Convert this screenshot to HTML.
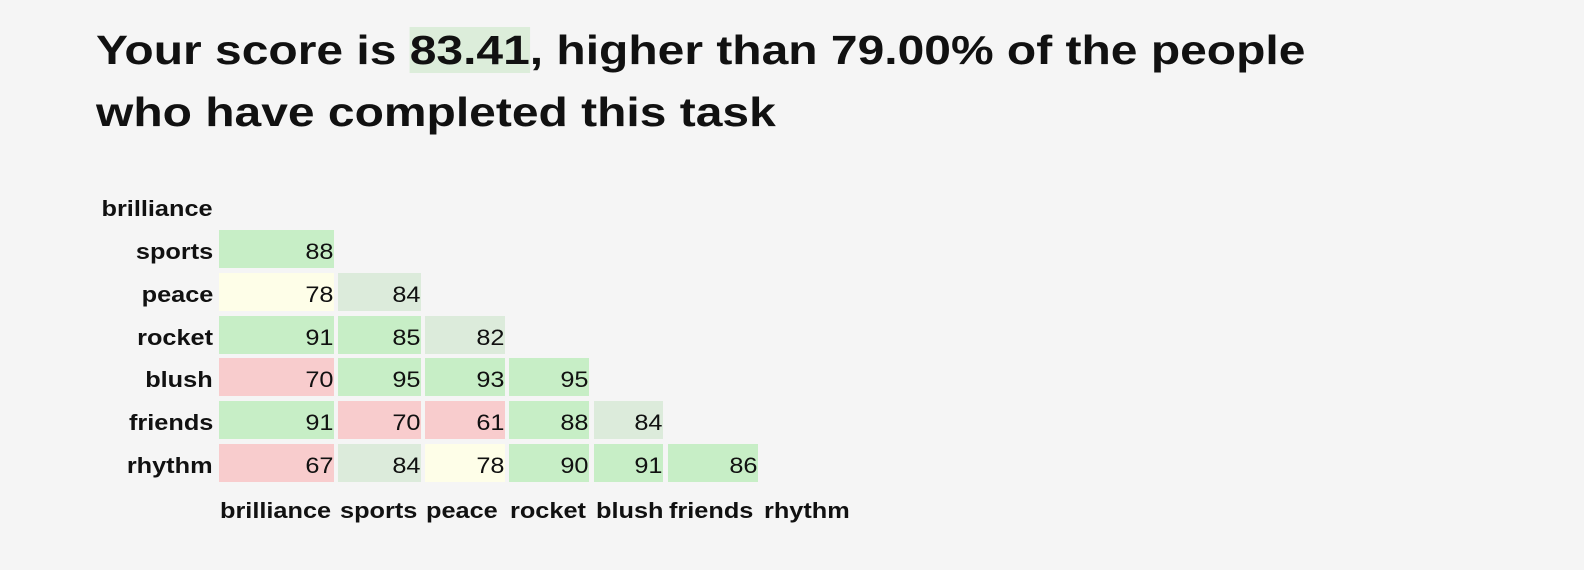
<!DOCTYPE html>
<html><head><style>
body{margin:0;background:#f5f5f5;width:1584px;height:570px;overflow:hidden;font-family:"Liberation Sans",Arial,sans-serif;color:#111;position:relative}
h1{position:absolute;left:96px;top:19px;margin:0;font-size:41px;line-height:62px;font-weight:bold;white-space:nowrap;transform:scaleX(1.17);transform-origin:0 0}
h1 span{background:#dcedda}
.c{position:absolute;height:38px;line-height:44px;font-size:22px;text-align:right;padding-right:1px;box-sizing:border-box}
.c b{display:inline-block;font-weight:normal;transform:scaleX(1.15);transform-origin:100% 50%}
.l{position:absolute;font-size:22px;font-weight:bold;line-height:48px;transform:scaleX(1.15);transform-origin:0 50%}
.r{transform-origin:100% 50%;right:1371px;text-align:right}
.g{background:#c7eec6}.lg{background:#dcebdb}.y{background:#fefee8}.rd{background:#f8cccd}
</style></head><body>
<h1>Your score is <span>83.41</span>, higher than 79.00% of the people<br>who have completed this task</h1>
<div class="l r" style="top:185px">brilliance</div>
<div class="l r" style="top:228px">sports</div>
<div class="l r" style="top:271px">peace</div>
<div class="l r" style="top:314px">rocket</div>
<div class="l r" style="top:356px">blush</div>
<div class="l r" style="top:399px">friends</div>
<div class="l r" style="top:442px">rhythm</div>

<div class="c g" style="left:219px;width:115px;top:230px"><b>88</b></div>

<div class="c y" style="left:219px;width:115px;top:273px"><b>78</b></div>
<div class="c lg" style="left:338px;width:83px;top:273px"><b>84</b></div>

<div class="c g" style="left:219px;width:115px;top:316px"><b>91</b></div>
<div class="c g" style="left:338px;width:83px;top:316px"><b>85</b></div>
<div class="c lg" style="left:425px;width:80px;top:316px"><b>82</b></div>

<div class="c rd" style="left:219px;width:115px;top:358px"><b>70</b></div>
<div class="c g" style="left:338px;width:83px;top:358px"><b>95</b></div>
<div class="c g" style="left:425px;width:80px;top:358px"><b>93</b></div>
<div class="c g" style="left:509px;width:80px;top:358px"><b>95</b></div>

<div class="c g" style="left:219px;width:115px;top:401px"><b>91</b></div>
<div class="c rd" style="left:338px;width:83px;top:401px"><b>70</b></div>
<div class="c rd" style="left:425px;width:80px;top:401px"><b>61</b></div>
<div class="c g" style="left:509px;width:80px;top:401px"><b>88</b></div>
<div class="c lg" style="left:594px;width:69px;top:401px"><b>84</b></div>

<div class="c rd" style="left:219px;width:115px;top:444px"><b>67</b></div>
<div class="c lg" style="left:338px;width:83px;top:444px"><b>84</b></div>
<div class="c y" style="left:425px;width:80px;top:444px"><b>78</b></div>
<div class="c g" style="left:509px;width:80px;top:444px"><b>90</b></div>
<div class="c g" style="left:594px;width:69px;top:444px"><b>91</b></div>
<div class="c g" style="left:668px;width:90px;top:444px"><b>86</b></div>

<div class="l" style="left:220px;top:487px">brilliance</div>
<div class="l" style="left:340px;top:487px">sports</div>
<div class="l" style="left:426px;top:487px">peace</div>
<div class="l" style="left:510px;top:487px">rocket</div>
<div class="l" style="left:596px;top:487px">blush</div>
<div class="l" style="left:669px;top:487px">friends</div>
<div class="l" style="left:764px;top:487px">rhythm</div>
</body></html>
